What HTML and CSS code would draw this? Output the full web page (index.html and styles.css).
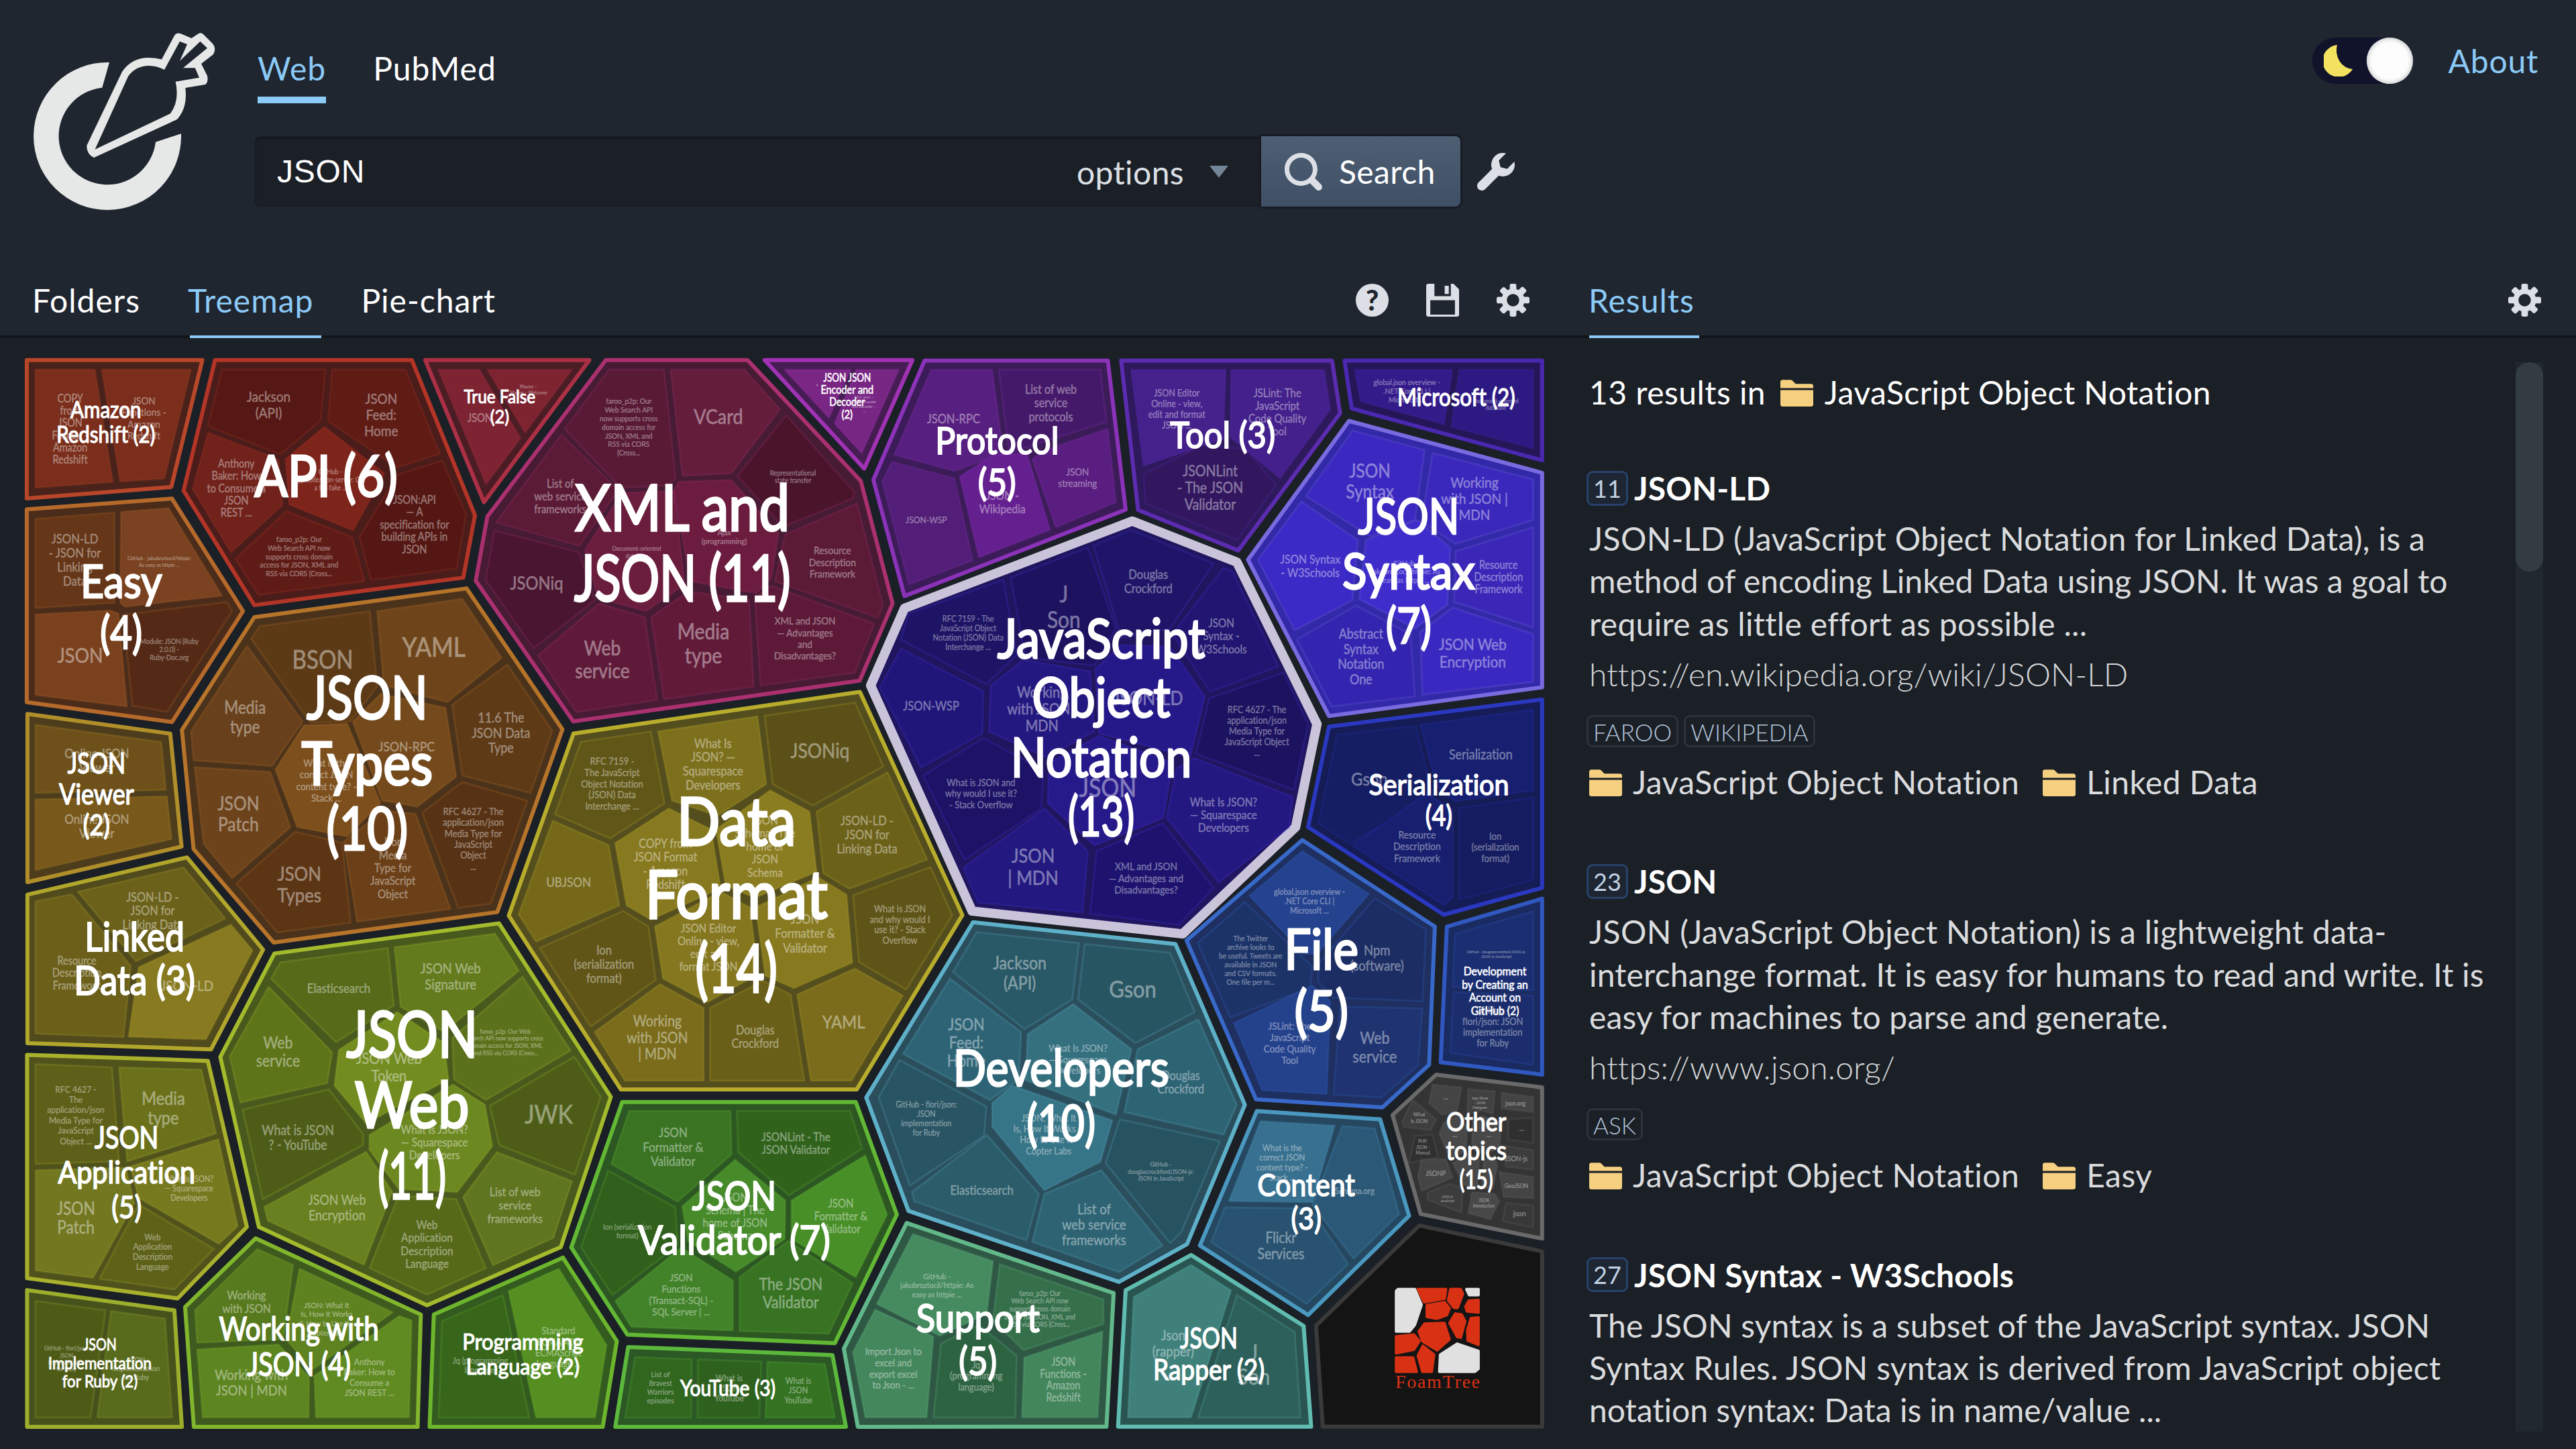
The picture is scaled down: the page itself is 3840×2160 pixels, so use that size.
FILE: index.html
```html
<!DOCTYPE html>
<html lang="en">
<head>
<meta charset="utf-8">
<title>JSON - Carrot2 search results clustering</title>
<link rel="stylesheet" href="styles.css">
</head>
<body>
<svg class="defs" width="0" height="0">
  <symbol id="i-cog" viewBox="0 0 16 16"><path fill-rule="evenodd" d="M15.19 6.39h-1.85c-.11-.37-.27-.71-.45-1.04l1.36-1.36c.31-.31.31-.82 0-1.13l-1.13-1.13a.803.803 0 00-1.13 0l-1.36 1.36c-.33-.17-.67-.33-1.04-.44V.79c0-.44-.36-.8-.8-.8h-1.6c-.44 0-.8.36-.8.8v1.86c-.39.12-.75.28-1.1.47l-1.3-1.3c-.3-.3-.79-.3-1.09 0L1.82 2.91c-.3.3-.3.79 0 1.09l1.3 1.3c-.2.34-.36.7-.48 1.09H.79c-.44 0-.8.36-.8.8v1.6c0 .44.36.8.8.8h1.85c.11.37.27.71.45 1.04l-1.36 1.36c-.31.31-.31.82 0 1.13l1.13 1.13c.31.31.82.31 1.13 0l1.36-1.36c.33.18.67.33 1.04.44v1.86c0 .44.36.8.8.8h1.6c.44 0 .8-.36.8-.8v-1.86c.39-.12.75-.28 1.1-.47l1.3 1.3c.3.3.79.3 1.09 0l1.09-1.09c.3-.3.3-.79 0-1.09l-1.3-1.3c.19-.35.36-.71.48-1.1h1.85c.44 0 .8-.36.8-.8v-1.6a.816.816 0 00-.81-.79zm-7.2 4.6c-1.66 0-3-1.34-3-3s1.34-3 3-3 3 1.34 3 3-1.34 3-3 3z"/></symbol>
  <symbol id="i-folder" viewBox="0 0 16 16"><path d="M0 14c0 .55.45 1 1 1h14c.55 0 1-.45 1-1V7H0v7zM15 4H7.41L5.7 2.3A.965.965 0 005 2H1c-.55 0-1 .45-1 1v3h16V5c0-.55-.45-1-1-1z"/></symbol>
  <symbol id="i-search" viewBox="0 0 16 16"><path fill-rule="evenodd" d="M15.55 13.43l-2.67-2.68a6.94 6.94 0 001.11-3.76c0-3.87-3.13-7-7-7s-7 3.13-7 7 3.13 7 7 7c1.39 0 2.68-.42 3.76-1.11l2.68 2.67a1.498 1.498 0 102.12-2.12zm-8.56-1.44c-2.76 0-5-2.24-5-5s2.24-5 5-5 5 2.24 5 5-2.24 5-5 5z"/></symbol>
  <symbol id="i-wrench" viewBox="0 0 16 16"><path d="M15.83 3.7l-3.06 3.05-2.84-.7-.7-2.83L12.29.17a5.004 5.004 0 00-4.83 1.29 4.967 4.967 0 00-1.12 5.36L.58 12.58c-.36.36-.58.86-.58 1.41 0 1.1.9 2 2 2 .55 0 1.05-.22 1.41-.59l5.77-5.77c1.79.69 3.91.35 5.35-1.12 1.32-1.3 1.74-3.15 1.3-4.81z"/></symbol>
  <symbol id="i-save" viewBox="0 0 16 16"><path fill-rule="evenodd" d="M1 0h3v6h8V0h1.3L16 2.7V15c0 .55-.45 1-1 1H1c-.55 0-1-.45-1-1V1c0-.55.45-1 1-1zM2 8v7h12V8zM9 1h2v4H9z"/></symbol>
</svg>

<header class="header">
  <svg class="logo" viewBox="0 0 380 400" width="380" height="400">
    <path d="M163 93A110 110 0 1 0 270 199.3L232 211.7A72.5 72.5 0 1 1 152.3 130.7Z"/>
    <path fill-rule="evenodd" d="M140 235Q129 230 129.300 217L182 107Q196 86 222 86Q232 86 241 88.500L260 53Q263 48 269 50L285.500 57L296 50Q300 48 303 51L317 65Q323 72 318 81L300 95L309 113Q311 122 306 126L276.300 131Q280 160 264 178ZM141.600 222.700L254 169.300Q268 150 261.700 121.700L297 115.700L290.800 101.300H273L309 71.700L298.500 61.700L268 90.700L279 66L268 61.700L245 104Q234 98 222 98Q203 98 191.300 113.300Z"/>
  </svg>
  <div class="search-area">
    <nav class="sources"><a class="active">Web</a><a>PubMed</a></nav>
    <div class="search-row">
      <div class="query"><span class="term">JSON</span><span class="options">options</span><i class="caret"></i></div>
      <button class="go"><svg class="icon-lg"><use href="#i-search"/></svg>Search</button>
      <svg class="icon-lg wrench"><use href="#i-wrench"/></svg>
    </div>
  </div>
  <div class="top-right">
    <div class="toggle">
      <svg class="moon" viewBox="0 0 43 47"><path d="M20 0A24 24 0 1 0 43 36A24.500 28 0 0 1 20 0Z"/></svg>
      <span class="knob"></span>
    </div>
    <a class="about">About</a>
  </div>
</header>

<main class="panes">
  <section class="clusters">
    <div class="tabs">
      <a>Folders</a><a class="active">Treemap</a><a>Pie-chart</a>
      <div class="tools">
        <span class="icon help">?</span>
        <svg class="icon"><use href="#i-save"/></svg>
        <svg class="icon"><use href="#i-cog"/></svg>
      </div>
    </div>
    <svg id="treemap" class="treemap" viewBox="0 504 2340 1656"></svg>
  </section>

  <section class="results">
    <div class="tabs">
      <a class="active">Results</a>
      <div class="tools"><svg class="icon"><use href="#i-cog"/></svg></div>
    </div>
    <div class="results-body">
      <div class="list">
        <p class="summary">13 results in <svg class="icon folder"><use href="#i-folder"/></svg>JavaScript Object Notation</p>
        <article class="result">
          <h3><span class="rank">11</span>JSON-LD</h3>
          <p class="snippet"><span class="loose">JSON-LD (JavaScript Object Notation for Linked Data), is a</span><br>method of encoding Linked Data using JSON. It was a goal to<br><span class="loose">require as little effort as possible ...</span></p>
          <p class="url">https://en.wikipedia.org/wiki/JSON-LD</p>
          <div class="tags"><span>FAROO</span><span>WIKIPEDIA</span></div>
          <div class="folders"><span><svg class="icon folder"><use href="#i-folder"/></svg>JavaScript Object Notation</span><span><svg class="icon folder"><use href="#i-folder"/></svg>Linked Data</span></div>
        </article>
        <article class="result">
          <h3><span class="rank">23</span>JSON</h3>
          <p class="snippet"><span class="loose">JSON (JavaScript Object Notation) is a lightweight data-</span><br><span class="airy">interchange format. It is easy for humans to read and write. It is</span><br><span class="airy">easy for machines to parse and generate.</span></p>
          <p class="url">https://www.json.org/</p>
          <div class="tags"><span>ASK</span></div>
          <div class="folders"><span><svg class="icon folder"><use href="#i-folder"/></svg>JavaScript Object Notation</span><span><svg class="icon folder"><use href="#i-folder"/></svg>Easy</span></div>
        </article>
        <article class="result">
          <h3><span class="rank">27</span>JSON Syntax - W3Schools</h3>
          <p class="snippet"><span class="airy">The JSON syntax is a subset of the JavaScript syntax. JSON</span><br><span class="loose">Syntax Rules. JSON syntax is derived from JavaScript object</span><br>notation syntax: Data is in name/value ...</p>
        </article>
      </div>
      <div class="scrollbar"><i></i></div>
    </div>
  </section>
</main>
<script src="treemap.js"></script>
</body>
</html>
```
FILE: styles.css
```css
* { box-sizing: border-box; }
body {
  margin: 0;
  width: 3840px;
  height: 2160px;
  overflow: hidden;
  background: #1b1f26;
  color: #fff;
  font: 48px/63.36px Lato, "Noto Sans", sans-serif;
  font-variant-ligatures: none;
}
.defs { display: block; }
p, h3 { margin: 0; }

.icon { width: 49px; height: 49px; fill: #dce0e6; }
.icon-lg { width: 56px; height: 56px; fill: #dce0e6; flex: none; }
.folder { fill: #f5d080; flex: none; }
.help {
  border-radius: 50%;
  background: #dce0e6;
  color: #1f2630;
  font-size: 42px;
  font-weight: 900;
  letter-spacing: 0;
  line-height: 49px;
  text-align: center;
}

.header { display: flex; height: 400px; background: #1f2630; }
.logo { fill: #e6e8e7; flex: none; }
.search-area { padding-top: 69.700px; }
.sources { display: flex; gap: 70px; padding-left: 4px; letter-spacing: 1px; }
.sources a { border-bottom: 10px solid transparent; padding-bottom: 11px; }
.sources .active { color: #8ccaf7; border-color: #8ccaf7; }
.search-row { display: flex; align-items: center; height: 105px; margin-top: 49px; }
.query {
  display: flex;
  align-items: center;
  width: 1500px;
  height: 105px;
  padding: 0 49px 0 33px;
  background: #1b1f26;
  border-radius: 8px 0 0 8px;
  box-shadow: inset 0 0 0 2px #181c21, inset 0 4px 2px #14181d;
}
.term { flex: 1; font-family: "Liberation Sans", Arial, sans-serif; letter-spacing: .8px; }
.options { color: #dce0e6; margin-right: 38px; padding-top: 3px; letter-spacing: .4px; }
.caret { border: 14px solid transparent; border-top: 18px solid #738698; border-bottom: 0; }
.go {
  display: flex;
  align-items: center;
  gap: 25px;
  width: 297px;
  height: 105px;
  padding: 0 0 0 35px;
  border: 0;
  border-radius: 0 8px 8px 0;
  box-shadow: 0 0 0 3px #181c22;
  background: linear-gradient(#4e5f73, #3f4f66);
  color: #fff;
  font: inherit;
  letter-spacing: .4px;
}
.wrench { margin-left: 25px; }
.top-right { display: flex; align-items: center; height: 69px; margin: 56px 56px 0 auto; gap: 53px; }
.toggle {
  display: flex;
  justify-content: space-between;
  align-items: center;
  width: 150px;
  height: 69px;
  padding-left: 17px;
  border-radius: 35px;
  background: #10132a;
}
.moon { width: 43px; height: 47px; fill: #f3e160; }
.knob { width: 69px; height: 69px; border-radius: 50%; background: #fdfdfd; box-shadow: inset 0 0 6px 2px #c9cccc; }
.about { color: #8ccaf7; letter-spacing: .8px; }

.panes { display: flex; height: 1760px; }
.clusters { width: 2340px; }
.results { flex: 1; display: flex; flex-direction: column; }
.tabs {
  display: flex;
  gap: 71px;
  height: 104px;
  padding: 15.700px 60px 0 48px;
  background: #1f2630;
  border-bottom: 4px solid #13171c;
  letter-spacing: 1px;
}
.results .tabs { padding: 15.700px 52px 0 28px; }
.tabs .active { position: relative; color: #8ccaf7; }
.tabs .active::after {
  content: "";
  position: absolute;
  left: 3px;
  right: -12px;
  bottom: -4px;
  height: 4px;
  background: #8ccaf7;
}
.results .tabs .active::after { left: 1px; right: -7px; }
.tools { display: flex; gap: 56px; margin: 7px 0 0 auto; }
.treemap { display: block; width: 2340px; height: 1656px; }

.results-body { display: flex; justify-content: space-between; flex: 1; min-height: 0; padding: 36px 49px 26px 29px; }
.list { padding-top: 12.700px; height: 1630px; overflow: visible; }
.summary { display: flex; white-space: pre; letter-spacing: .45px; }
.summary .folder { margin: 7px 17px 0 9px; }
.result { margin-top: 80px; }
.result + .result { margin-top: 85.400px; }
.result h3 { display: flex; align-items: center; font-size: 48px; font-weight: 700; letter-spacing: .15px; }
.rank {
  width: 62px;
  height: 52px;
  margin: 0 9px 0 -4px;
  border: 3px solid #27426a;
  border-radius: 9px;
  background: #1d2632;
  color: #c3d2e4;
  font: 400 36px/46px Lato, sans-serif;
  text-align: center;
}
.snippet { margin-top: 11.700px; color: #dadcde; white-space: nowrap; }
.loose { letter-spacing: .3px; }
.airy { letter-spacing: .17px; }
.url { margin-top: 12px; color: #d4d7da; font-weight: 300; letter-spacing: .15px; }
.tags { display: flex; gap: 8px; margin: 29px 0 20px -4px; }
.tags span {
  height: 48px;
  padding: 0 7px;
  border: 3px solid #2a323b;
  border-radius: 9px;
  color: #b4c6dc;
  font-size: 35px;
  font-weight: 300;
  line-height: 44px;
}
.folders { display: flex; gap: 35px; color: #dadcde; letter-spacing: .45px; }
.folders span { display: flex; }
.folders .folder { margin: 7px 16px 0 0; }
.scrollbar { width: 41px; height: 1594px; background: #22282f; }
.scrollbar i { display: block; height: 312px; border-radius: 20px; background: #333b43; }

.treemap text { font-family: Lato, "Noto Sans", sans-serif; text-anchor: middle; }
.treemap polygon { stroke-linejoin: round; }
.group { stroke-width: 6px; }
.group.selected { stroke-width: 14px; }
.cell { stroke-width: 3px; stroke-opacity: .22; }
.cell-label { fill: #fff; stroke: #fff; stroke-width: .016em; opacity: .42; }
.title { fill: #fff; stroke: #fff; stroke-width: .036em; }
.brand { stroke-width: 4px; }
.treemap .brand-name { fill: #d93114; font-family: "Liberation Serif", serif; }
```
FILE: treemap.js
```js
// Survey sheets: every sheet has an origin and a unit size on the canvas.
// A letter before a coordinate selects the sheet it is measured on.
const SHEETS = {
  a: [20, 520, .49745, .35714], b: [700, 520, .5102, .35714],
  c: [1280, 520, .66327, .54847], d: [20, 1040, .49745, .35714],
  e: [740, 1020, .48469, .40816], f: [1280, 1300, .66327, .54209],
  g: [20, 1560, .48469, .37628], h: [740, 1600, .44643, .35077]
};

// Group: [sheet, outline, stroke, background, title, "x baseline pitch widths", cells]
// Cell: [fill, outline, label, "x baseline pitch"]
const FAROO = "faroo_p2p: Our~Web Search API now~supports cross domain~access for JSON, XML and~RSS via CORS (Cross...";
const GROUPS = [
["a","40,47 566,47 473,577 40,624","#b8472a","#49221b","Amazon~Redshift (2)","277 288 104 210,293",[
 ["#7a2e1b","66,87 244,87 298,556 66,580","COPY~from~JSON~Format -~Amazon~Redshift","170 224 51"],
 ["#7a2e1b","265,87 532,87 452,542 320,554","JSON~Functions -~Amazon~Redshift","391 233 48"]]],
["a","604,47 1194,47 1383,695 1348,955 722,1070 510,592","#b23527","#4a1c1a","API (6)","937 615 260 425",[
 ["#561814","625,87 935,87 920,300 800,440 583,322","Jackson~(API)","765 220 67"],
 ["#5e1c15","955,87 1175,87 1278,438 1150,495 943,302","JSON~Feed:~Home","1102 230 67"],
 ["#70221b","583,350 765,445 795,465 806,652 652,850 537,585","Anthony~Baker: How~to Consume a~JSON~REST ...","668 496 51"],
 ["#7d251b","932,325 1112,520 1018,758 826,650 815,460","GitHub -~typicode/json-server: Get~a full fake ...","950 524 33"],
 ["#5f1c16","818,677 1015,785 1052,970 735,1028 665,876",FAROO,"856 806 36"],
 ["#541713","1152,525 1285,467 1356,690 1328,917 1072,965 1037,785","JSON:API~— A~specification for~building APIs in~JSON","1202 646 52"]]],
["b","a1234,47 b350,47 42,640","#ac3045","#4a1d24","True False~(2)","88 226 86 207,55",[
 ["#7d2332","a1273,87 1396,87 1520,372 1416,565","JSON","a1398 304 52"],
 ["#7d2430","52,87 299,87 162,350","Maven –~Maven – Welcome","172 166 24"]]],
["b","398,47 812,47 1143,552 1236,1063 1140,1385 303,1555 18,968 52,700","#aa3070","#461b33","XML and~JSON (11)","622 760 292 620,626",[
 ["#581a35","407,87 568,87 602,540 580,572 440,578 278,335","faroo_p2p: Our~Web Search API~now supports cross~domain access for~JSON, XML and~RSS via CORS~(Cross...","465 230 36"],
 ["#641d3b","587,87 803,87 907,252 765,520 622,530","VCard","727 314 95"],
 ["#4a142b","925,278 1125,600 1120,625 915,742 783,530","Representational~state transfer","945 528 33"],
 ["#5b1a36","268,358 435,590 320,822 77,725","List of~web service~frameworks","265 580 53"],
 ["#6a1d3d","445,602 598,592 628,985 515,1095 375,1040 337,840","Document-oriented~database","488 843 30"],
 ["#6b1c3f","610,555 765,547 903,770 882,955 838,1020 645,970 597,595","Ajax~(programming)","744 778 38"],
 ["#5b1a36","1132,645 1208,1070 1192,1122 892,970 922,775","Resource~Description~Framework","1060 858 49"],
 ["#4a1530","73,758 320,850 365,1050 187,1250 47,965","JSONiq","196 1004 84"],
 ["#5f1a39","378,1063 512,1120 548,1465 312,1517 200,1280","Web~service","388 1280 94"],
 ["#611b39","640,1012 817,1048 830,1410 568,1463 530,1120","Media~type","683 1213 100"],
 ["#5d1a38","880,988 1182,1147 1125,1352 850,1405 833,1040","XML and JSON~— Advantages~and~Disadvantages?","980 1152 48"]]],
["b","862,47 1294,47 1153,500","#a032b4","#461d52","JSON JSON~Encoder and~Decoder~(2)","1103 137 51 138,153,103,32",[
 ["#7a2684","920,87 1113,87 1050,288","•","1015 158 20"],
 ["#782684","1130,87 1254,87 1146,435 1066,312","18.2. json —~JSON encoder~and decoder —~...","1153 207 20"]]],
["c","148,32 560,32 600,437 103,672 33,356","#8a32b8","#3c1c58","Protocol~(5)","311 287 112 275,85",[
 ["#571f80","163,57 300,57 325,285 215,332 80,288","JSON-RPC","213 203 38"],
 ["#45196a","315,57 543,57 557,198 440,243 345,280 337,270","List of web~service~protocols","432 122 37"],
 ["#521e78","75,307 215,352 256,575 113,640 53,360","JSON-WSP","152 474 28"],
 ["#652090","378,282 430,492 270,567 227,347 300,290","JSON -~Wikipedia","323 410 36"],
 ["#5a1d80","560,217 578,417 443,485 390,300 420,275","JSON~streaming","492 345 31"]]],
["c","590,32 1064,32 1082,175 853,548 628,438","#5c2cb0","#2e195c","Tool (3)","818 270 108 234",[
 ["#45218c","612,57 825,57 820,245 640,318","JSON Editor~Online - view,~edit and format~JSON ...","715 130 29"],
 ["#43208b","837,57 1046,57 1060,165 947,352 835,240","JSLint: The~JavaScript~Code Quality~Tool","941 132 34.5"],
 ["#32175f","772,262 870,272 938,370 850,520 645,420 640,340","JSONLint~- The JSON~Validator","790 347 45"]]],
["c","1092,32 1536,32 1536,303 1108,162","#4a28b0","#251757","Microsoft (2)","1343 154 75 262",[
 ["#341b8a","1115,57 1334,57 1316,205 1128,143","global.json overview -~.NET Core CLI |~Microsoft ...","1232 98 24"],
 ["#2c1a82","1350,57 1516,57 1516,270 1332,212","Document-oriented~database","1432 147 18"]]],
["c","1102,196 1536,337 1536,920 1057,998 875,573","#7a6ae0","#3129a8","JSON~Syntax~(7)","1236 503 149 225,295,102",[
 ["#3a28c0","1110,222 1272,275 1250,465 1150,510 1005,400","JSON~Syntax","1149 350 56"],
 ["#3a28bd","1290,283 1516,355 1516,465 1342,530 1265,470","Working~with JSON |~MDN","1384 377 44"],
 ["#3c2ac6","995,415 1122,520 1110,683 980,765 897,573","JSON Syntax~- W3Schools","1015 583 36"],
 ["#3f2dcb","1255,465 1330,540 1323,695 1250,760 1125,680 1140,520","GitHub -~jakubroztocil/httpie: As~easy as httpie ...","1230 590 23"],
 ["#3a27b8","1516,485 1516,757 1338,688 1342,550","Resource~Description~Framework","1438 598 33"],
 ["#3325b0","1118,698 1240,775 1250,945 1063,972 985,790","Abstract~Syntax~Notation~One","1129 788 41"],
 ["#3a29c0","1335,703 1516,775 1516,905 1267,940 1262,770","JSON Web~Encryption","1380 818 48"]]],
["c","1057,1027 1536,953 1536,1465 1315,1538 1010,1300","#2a38c0","#161c55","Serialization~(4)","1304 1212 85 312,60",[
 ["#151e62","1075,1048 1252,1025 1290,1215 1105,1345 1033,1290","Gson","1148 1187 55"],
 ["#171f70","1262,1022 1516,980 1516,1200 1340,1230 1300,1190","Serialization","1398 1116 41"],
 ["#171f6e","1275,1210 1335,1250 1335,1490 1315,1512 1110,1350","Resource~Description~Framework","1255 1330 32"],
 ["#151c60","1350,1248 1516,1220 1516,1443 1350,1497","Ion~(serialization~format)","1431 1334 30"]]],
["a","40,670 475,625 688,1095 475,1558 40,1475","#b5692a","#4b2c1a","Easy~(4)","323 1040 211 242,125",[
 ["#653618","66,710 303,683 303,1060 66,1082","JSON-LD~- JSON for~Linking~Data","184 811 59"],
 ["#7a4220","322,680 465,665 625,1030 335,1077 320,1060","GitHub - jakubroztocil/httpie:~As easy as httpie ...","437 883 26"],
 ["#7a411e","66,1108 290,1092 315,1105 340,1493 66,1445","JSON","200 1311 95"],
 ["#542a16","328,1110 640,1057 655,1095 460,1515 357,1490","Module: JSON (Ruby~2.0.0) -~Ruby-Doc.org","467 1232 34"]]],
["d","a722,1120 1358,1000 e203,165 d1450,895 780,1022 540,632 505,135","#b5742a","#4b321b","JSON~Types~(10)","1060 90 273 360,390,242",[
 ["#5c3a16","a738,1158 1068,1095 1090,1410 1010,1555 890,1560 712,1210","BSON","a927 1335 117"],
 ["#6e451a","a1090,1095 1345,1043 1463,1290 1300,1475 1110,1405","YAML","a1260 1285 125"],
 ["#5e3a17","a1480,1318 e172,170 105,397 d1345,325 1315,30","11.6 The~JSON Data~Type","1461 104 63"],
 ["#68401b","a700,1240 d867,100 775,285 540,262 532,140","Media~type","694 68 80"],
 ["#6c431b","543,290 770,310 830,540 655,755 570,610","JSON~Patch","674 470 87"],
 ["#7c4f1d","870,115 1000,108 1100,440 1000,580 850,540 785,300","What is the~correct JSON~content type? -~Stack ...","938 289 48"],
 ["#744a1c","a1100,1440 d1295,42 1327,330 1210,455 1105,430 1017,100","JSON-RPC","1178 223 62"],
 ["#583214","1345,352 1540,430 1430,860 1333,878 1225,480","RFC 4627 - The~application/json~Media Type for~JavaScript~Object~...","1378 489 46"],
 ["#5c3515","845,560 985,605 1010,940 790,980 668,775","JSON~Types","857 763 91"],
 ["#6b4018","1110,470 1205,485 1310,882 1030,935 990,600","Json~Media~Type for~JavaScript~Object","1137 620 54"]]],
["d","42,68 470,150 504,622 42,770","#b08e2a","#4e3d1c","JSON~Viewer~(2)","249 315 129 172,222,80",[
 ["#6e511a","66,113 443,185 457,385 66,398","Online JSON~Viewer","250 252 60"],
 ["#78581b","66,425 460,412 474,590 66,720","Online JSON~Viewer","250 525 60"]]],
["d","42,822 520,667 748,1052 592,1468 42,1442","#b0a62c","#504a1c","Linked~Data (3)","363 1057 183 296,360",[
 ["#6b5f1a","66,850 175,820 352,1120 330,1417 66,1402","Resource~Description~Framework","190 1115 51"],
 ["#6b611a","193,810 510,708 635,922 367,1100","JSON-LD -~JSON for~Linking Data","417 850 58"],
 ["#877a20","375,1125 652,947 717,1055 577,1427 345,1415","JSON-LD","520 1223 67"]]],
["g","42,33 598,57 718,715 505,998 42,918","#a9b02c","#50521c","JSON~Application~(5)","348 405 137 195,418,92",[
 ["#5e5f18","68,70 303,82 325,455 68,465","RFC 4627 -~The~application/json~Media Type for~JavaScript~Object ...","192 182 41"],
 ["#6b711b","325,82 578,92 623,345 350,455","Media~type","461 230 79"],
 ["#77791f","360,475 630,367 690,712 632,782 385,600","What Is JSON?~— Squarespace~Developers","540 537 37"],
 ["#727720","68,490 345,480 372,620 245,917 68,888","JSON~Patch","192 666 76"],
 ["#5e6118","385,625 617,802 495,962 265,920","Web~Application~Description~Language","428 767 39"]]],
["g","42,965 495,1045 518,1507 42,1507","#9cae2c","#46521c","JSON~Implementation~for Ruby (2)","266 1205 73 102,315,230",[
 ["#4e5b17","68,1008 283,1045 237,1470 68,1470","GitHub - flori/json:~JSON~implementation~for Ruby","163 1205 27"],
 ["#586a1b","300,1048 466,1078 488,1470 258,1470","JSON~Implementation~for Ruby","378 1252 34"]]],
["g","745,760 1253,1062 1243,1507 555,1507 528,1032","#80b52c","#3f5a1e","Working with~JSON (4)","878 1165 140 487,315",[
 ["#587a1e","750,802 860,865 830,1160 565,1173 558,1045","Working~with JSON","717 1003 52"],
 ["#5f8220","880,880 1167,1053 920,1280 838,1160","JSON: What It~Is, How It Works~& How to Use It -~Copter Labs","963 1036 36"],
 ["#5d8520","565,1200 815,1180 910,1310 908,1470 582,1470","Working with~JSON | MDN","732 1321 62"],
 ["#608a22","1187,1067 1225,1085 1217,1470 930,1470 925,1305","Anthony~Baker: How to~Consume a~JSON REST ...","1095 1262 41"]]],
["g","d782,1068 1455,942 h382,100 215,738 g1272,1025 755,715 d620,1500","#a2ba2c","#48591d","JSON~Web~(11)","1226 42 280 400,348,208",[
 ["#566a19","d800,1105 1122,1045 1140,1285 967,1438 772,1173","Elasticsearch","d975 1233 59"],
 ["#637b1d","d1142,1042 1443,985 1515,1140 1290,1395 1160,1290","JSON Web~Signature","d1310 1152 66"],
 ["#5c711b","e80,1068 228,1338 g1453,212 1355,130 d1315,1420","faroo_p2p: Our Web~Search API now supports cross~domain access for JSON, XML~and RSS via CORS (Cross...","d1474 1402 30"],
 ["#5e7419","d765,1207 955,1480 g965,145 698,222 665,40","Web~service","d793 1465 75"],
 ["#728c20","d1150,1312 1290,1440 g1338,130 1085,305 987,155 d975,1470","JSON Web~Token","1155 70 68"],
 ["#4d5d17","705,250 970,170 1075,345 1075,390 767,605","What is JSON~? - YouTube","875 350 59"],
 ["#6c8820","1352,150 1450,230 1473,395 1365,577 1185,565 1095,410 1095,350","What Is JSON?~— Squarespace~Developers","1295 345 51"],
 ["#68801f","1085,417 1165,575 1078,865 782,690 772,635","JSON Web~Encryption","995 628 60"],
 ["#566919","1185,590 1362,605 1453,878 1272,983 1095,878","Web~Application~Description~Language","1272 722 52"],
 ["#4d5d17","e240,1360 h348,100 262,430 10,305 g1465,235","JWK","h175 215 122"],
 ["#607520","1487,418 h253,458 190,700 g1475,867 1383,597","List of web~service~frameworks","h62 522 57"]]],
["e","237,180 1118,28 1433,843 1108,1480 383,1480 38,845","#b8ac2c","#544d1d","Data~Format~(14)","738 588 268 362,555,250",[
 ["#605617","260,210 475,173 517,435 350,563 180,475","RFC 7159 -~The JavaScript~Object Notation~(JSON) Data~Interchange ...","356 295 40.5"],
 ["#7d701d","497,172 803,117 830,365 680,480 540,425","What Is~JSON? —~Squarespace~Developers","666 232 50.5"],
 ["#5b5017","825,115 1103,67 1190,300 973,443 850,365","JSONiq","995 270 82"],
 ["#756819","173,498 345,587 378,808 122,940 68,840","UBJSON","222 741 53"],
 ["#87791f","530,453 660,530 690,745 475,860 400,808 365,580","COPY from~JSON Format~- Amazon~Redshift","520 598 49.5"],
 ["#8a7c20","842,387 963,465 985,685 795,780 705,735 675,530","JSON~Schema | The~home of~JSON~Schema","826 511 48"],
 ["#6c6119","1203,322 1325,640 1085,747 1005,690 985,465","JSON-LD -~JSON for~Linking Data","1140 515 51"],
 ["#5f5417","1335,668 1402,843 1260,1115 1115,1015 1097,770","What is JSON~and why would I~use it? - Stack~Overflow","1241 832 39"],
 ["#605417","390,828 468,885 490,1080 290,1250 133,963","Ion~(serialization~format)","331 987 51"],
 ["#85771f","690,757 780,815 805,1060 648,1162 512,1075 487,885","JSON Editor~Online - view,~edit and~format JSON","652 906 47"],
 ["#87791f","990,705 1077,768 1095,1017 915,1110 827,1065 797,815","JSON~Formatter &~Validator","949 875 52"],
 ["#7a6c1b","503,1095 637,1182 638,1448 395,1448 302,1270","Working~with JSON~| MDN","495 1250 60"],
 ["#6a5f18","820,1083 905,1133 947,1448 657,1448 657,1182","Douglas~Crockford","796 1278 50"],
 ["#7b6c1c","1103,1038 1250,1137 1092,1448 967,1448 925,1133","YAML","1068 1257 74"]]],
["h","g1293,1062 h222,783 402,1138 355,1502 g1280,1507","#6cb52c","#335a1f","Programming~Language (2)","88 1175 105 400,375",[
 ["#37661a","g1318,1088 1505,985 h110,1463 g1308,1470","Jq (programming~language)","g1436 1256 38"],
 ["#558f22","40,925 208,830 368,1155 330,1463 132,1463","Standard~ECMA-404~ECMAScript~Language ...","207 1110 46"]]],
["h","420,122 1200,122 1337,600 1130,1147 437,1110 250,740","#62b835","#2d5722","JSON~Validator (7)","794 582 188 278,635",[
 ["#3a7423","443,160 782,160 785,345 605,545 383,385","JSON~Formatter &~Validator","590 272 61"],
 ["#30621c","803,160 1180,160 1222,320 977,518 807,335","JSONLint - The~JSON Validator","1000 288 55"],
 ["#478a2a","797,367 965,540 963,705 800,843 640,715 620,565","JSON~Schema | The~home of JSON~Schema","797 543 54.5"],
 ["#488f28","1232,348 1305,600 1200,867 985,705 985,540","JSON~Formatter &~Validator","1150 569 54"],
 ["#30601c","373,413 597,570 605,730 387,942 283,740","Ion (serialization~format)","437 664 37"],
 ["#42832a","617,740 790,880 790,1093 450,1078 397,968","JSON~Functions~(Transact-SQL) -~SQL Server | ...","617 883 49"],
 ["#387323","975,712 1190,892 1110,1107 812,1095 812,865","The JSON~Validator","983 920 77"]]],
["h","440,1163 1122,1197 1167,1502 397,1502","#5cb83c","#2b5824","YouTube (3)","773 1370 100 315",[
 ["#31661f","463,1206 652,1215 650,1463 430,1463","List of~Bravest~Warriors~episodes","548 1291 37.5"],
 ["#2f611e","673,1215 885,1225 878,1463 672,1463","What is~JSON~YouTube","777 1307 43"],
 ["#357322","905,1225 1097,1235 1130,1463 898,1463","What is~JSON~YouTube","1008 1320 41"]]],
["f","108,965 573,1158 557,1525 h1207,1502 1160,1170","#62b88a","#2f5844","Support~(5)","268 1265 118 275,85",[
 ["#468a5f","122,995 302,1070 288,1215 182,1275 h1270,980","GitHub -~jakubroztocil/httpie: As~easy as httpie ...","176 1119 25"],
 ["#36704a","317,1078 550,1175 550,1243 370,1315 302,1232",FAROO,"407 1165 21.5"],
 ["#45875d","37,1203 168,1277 153,1500 15,1500 h1190,1185","Import Json to~excel and~export excel~to Json - ...","78 1328 31"],
 ["#2d6340","185,1297 270,1245 355,1330 352,1500 168,1500","Jq~(programming~language)","264 1365 30"],
 ["#43865c","548,1263 537,1500 367,1500 372,1335","JSON~Functions -~Amazon~Redshift","460 1357 33"]]],
["f","747,1053 1000,1248 1017,1525 583,1525 600,1150","#60bcb0","#2a5450","JSON~Rapper (2)","787 1310 86 128,248",[
 ["#3f807a","747,1080 837,1150 747,1500 605,1500 618,1168","Json~(rapper)","707 1288 43"],
 ["#2d5f5b","850,1163 980,1265 993,1500 763,1500","J~Son","888 1342 68"]]],
["f","257,138 712,198 868,640 738,1023 585,1127 112,932 17,620","#5eb0c8","#2a4e5c","Developers~(10)","455 588 152 480,153",[
 ["#295866","265,165 495,195 480,350 373,432 212,275","Jackson~(API)","362 268 54"],
 ["#285562","508,198 700,222 755,385 622,470 493,350","Gson","616 344 72"],
 ["#2d6375","205,293 365,440 360,570 295,627 100,500","JSON~Feed:~Home","242 435 50"],
 ["#35707f","482,363 613,487 578,667 375,572 380,445","What Is JSON?~— Squarespace~Developers","493 494 31"],
 ["#2d6474","763,405 850,640 820,722 597,660 627,487","Douglas~Crockford","724 572 37"],
 ["#285463","92,517 287,645 282,725 115,862 45,620","GitHub - flori/json:~JSON~implementation~for Ruby","152 648 25.5"],
 ["#367487","345,587 570,683 543,797 417,875 300,700 300,635","JSON: What It~Is, How It Works &~How to Use It -~Copter Labs","427 686 30"],
 ["#275260","587,680 812,740 725,990 700,1020 555,800","GitHub -~douglascrockford/JSON-js:~JSON in JavaScript","679 810 19.5"],
 ["#2b5c6a","288,723 405,885 377,1013 125,905 120,880","Elasticsearch","277 888 39"],
 ["#2d6373","545,820 683,1027 585,1100 390,1017 417,885","List of~web service~frameworks","529 940 43"]]],
["f","997,-88 1295,150 1282,530 1177,647 893,625 737,188","#3868c8","#1e2f60","File~(5)","1040 267 170 165,120",[
 ["#25428f","997,-58 1147,60 1030,225 1000,225 878,65","global.json overview -~.NET Core CLI |~Microsoft ...","1013 63 26"],
 ["#1c3368","868,82 1020,260 1015,318 835,400 762,195","The Twitter~archive looks to~be useful. Tweets are~available in JSON~and CSV formats.~One file per m...","881 190 24"],
 ["#1b2d63","1160,72 1275,158 1267,355 1065,345 1032,300 1035,250","Npm~(software)","1165 228 43"],
 ["#24418c","843,415 1020,312 1060,355 1052,610 907,600","JSLint: The~JavaScript~Code Quality~Tool","969 433 31.5"],
 ["#1e3370","1082,370 1267,375 1257,532 1175,620 1067,612","Web~service","1160 473 50"]]],
["f","1322,150 1536,73 1536,557 1308,523","#3058c0","#1a2b62","Development~by Creating an~Account on~GitHub (2)","1430 284 36 140,147,115,107",[
 ["#1b2e72","1340,170 1516,108 1516,325 1335,315","GitHub - douglascrockford/JSON-js:~JSON in JavaScript","1433 223 13"],
 ["#1b2d6c","1337,330 1516,340 1516,530 1330,497","GitHub -~flori/json: JSON~implementation~for Ruby","1425 390 30"]]],
["f","895,657 1172,680 1237,945 1010,1218 767,1027","#4a98c0","#264760","Content~(3)","1006 890 93 217,68",[
 ["#38708f","903,685 1070,697 1020,908 832,905","What is the~correct JSON~content type? -~Stack ...","952 767 27"],
 ["#2c5878","1087,698 1160,705 1215,940 1112,1063 1020,915","Schema.org","1115 885 27"],
 ["#285270","823,922 1015,925 1100,1078 1007,1187 792,1018","Flickr~Services","949 1020 45"]]],
["f","1298,557 1536,592 1536,1008 1263,940 1200,668","#6a6a6a","#343434","Other~topics~(15)","1388 712 79 133,135,75",[
 ["#444","1290,585 1355,592 1345,655 1312,668 1282,635","...","1320 625 24"],
 ["#414141","1370,597 1430,603 1425,665 1400,655 1368,668","App Store~- JSON~Designer","1396 626 13"],
 ["#444","1445,607 1516,618 1516,660 1445,650","json.org","1476 641 20"],
 ["#3e3e3e","1245,627 1298,680 1285,710 1225,700 1222,685","What~Is JSON","1260 672 17"],
 ["#2f2f2f","1460,680 1516,675 1516,745 1460,735","...","1490 712 24"],
 ["#303030","1250,725 1290,722 1302,785 1237,800","PHP:~JSON -~Manual","1268 746 15"],
 ["#484848","1315,690 1345,670 1368,700 1365,765 1330,790 1305,720","...","1340 728 24"],
 ["#484848","1380,685 1400,670 1445,690 1440,760 1405,775 1378,760","...","1416 728 24"],
 ["#3c3c3c","1450,752 1516,765 1516,818 1455,810","JSON-js","1478 795 22"],
 ["#454545","1265,790 1320,790 1335,840 1265,877 1257,835","JSONP","1297 835 22"],
 ["#484848","1335,800 1370,775 1395,790 1390,870 1360,860","",""],
 ["#484848","1405,790 1430,780 1435,810 1425,870 1400,870","",""],
 ["#444","1440,825 1516,838 1516,897 1450,893","GeoJSON","1478 868 19"],
 ["#3c3c3c","1330,857 1357,870 1355,937 1278,900 1280,880","JSON in~JavaScript","1323 896 11"],
 ["#484848","1378,880 1430,885 1440,905 1420,955 1370,938","JSON~Introduction","1405 908 14"],
 ["#383838","1455,910 1516,917 1516,977 1447,960","json","1485 947 25"]]],
["c","615,468 850,580 1030,1020 982,1300 728,1590 255,1528 27,915 103,705","#c9c4da","#20155f","JavaScript~Object~Notation~(13)","545 840 161.5 462,308,402,148",[
 ["#1d1465","95,790 112,720 325,628 355,832 287,912","RFC 7159 - The~JavaScript Object~Notation (JSON) Data~Interchange ...","246 742 25.5"],
 ["#1c1260","342,622 515,540 578,760 530,860 375,840","J~Son","461 690 69"],
 ["#1f1568","612,492 798,583 700,760 590,785 528,535","Douglas~Crockford","651 625 38"],
 ["#201570","820,595 840,605 943,863 790,932 705,775","JSON~Syntax -~W3Schools","815 757 35"],
 ["#20167a","95,815 280,930 278,1045 140,1138 48,920","JSON-WSP","163 982 38"],
 ["#231880","370,845 520,877 530,1040 420,1110 293,1040 297,915","Working~with JSON |~MDN","412 948 46"],
 ["#251888","590,805 700,810 778,945 745,1110 540,1045 532,870","JSON-LD","650 968 58"],
 ["#1b1260","955,880 1010,1020 978,1198 758,1100 788,950","RFC 4627 - The~application/json~Media Type for~JavaScript Object~...","895 990 29"],
 ["#1c1266","280,1058 415,1145 410,1250 238,1388 145,1160","What is JSON and~why would I use it?~- Stack Overflow","275 1189 29.5"],
 ["#261a8a","540,1052 705,1125 685,1275 530,1350 425,1235 428,1125","JSON","560 1218 78"],
 ["#231880","755,1112 975,1218 968,1300 810,1450 692,1275 715,1140","What Is JSON?~— Squarespace~Developers","820 1243 35"],
 ["#22187f","418,1250 515,1365 503,1532 268,1505 235,1410","JSON~| MDN","392 1397 59"],
 ["#1d136e","683,1290 798,1465 720,1565 520,1535 535,1365","XML and JSON~— Advantages and~Disadvantages?","646 1417 32"]],"selected"]
];

const RED = "#d93114", PALE = "#e0e0e0";
const BRAND = [
 [PALE,"1212,1147 1250,1147 1265,1190 1250,1245 1238,1263 1208,1263 1208,1152"],
 [RED,"1257,1147 1320,1147 1317,1173 1271,1183"], [RED,"1330,1147 1353,1147 1358,1160 1346,1198 1338,1198 1325,1178"],
 [PALE,"1366,1147 1393,1147 1393,1163 1372,1163"], [RED,"1371,1179 1393,1177 1393,1211 1367,1208 1364,1195"],
 [RED,"1277,1191 1317,1183 1328,1200 1322,1218 1300,1228 1277,1223"], [RED,"1341,1214 1355,1217 1363,1235 1353,1280 1345,1278 1328,1240"],
 [RED,"1376,1227 1393,1225 1393,1300 1369,1288 1368,1260"], [RED,"1272,1242 1316,1240 1328,1285 1300,1315 1267,1290 1259,1263"],
 [RED,"1208,1277 1248,1272 1260,1290 1248,1313 1208,1323"], [RED,"1208,1335 1246,1335 1254,1374 1208,1374"],
 [RED,"1268,1303 1293,1327 1288,1374 1267,1374 1257,1330"], [PALE,"1345,1297 1393,1317 1393,1366 1385,1374 1305,1374 1307,1327"]
];

const NS = "http://www.w3.org/2000/svg";
const svg = document.getElementById("treemap");
const SQUEEZE = .87;

function add(name, attrs, text) {
  const node = document.createElementNS(NS, name);
  for (const key in attrs) node.setAttribute(key, attrs[key]);
  if (text) node.textContent = text;
  svg.appendChild(node);
  return node;
}

function points(sheet, list) {
  return list.split(" ").map(pair => {
    if (/[a-h]/.test(pair[0])) { sheet = pair[0]; pair = pair.slice(1); }
    const [x, y] = pair.split(",").map(Number), [ox, oy, sx, sy] = SHEETS[sheet];
    return (ox + x * sx).toFixed(1) + "," + (oy + y * sy).toFixed(1);
  }).join(" ");
}

function label(sheet, text, place, cls) {
  if (!text) return;
  if (/[a-h]/.test(place[0])) { sheet = place[0]; place = place.slice(1); }
  const parts = place.split(" ");
  const widths = (parts[3] || "").split(",");
  const [x, y, pitch] = parts.map(Number), [ox, oy, sx, sy] = SHEETS[sheet];
  text.split("~").forEach((line, i) => {
    const node = add("text", { class: cls, "font-size": (pitch * sy * .91).toFixed(1) }, line);
    // Titles have a measured width; other labels share one condensed ratio.
    const ratio = widths[i] ? widths[i] * sx * 1.01 / node.getComputedTextLength() : SQUEEZE;
    node.setAttribute("transform", `translate(${(ox + x * sx).toFixed(1)} ${(oy + (y + i * pitch) * sy).toFixed(1)}) scale(${ratio.toFixed(3)} 1)`);
  });
}

for (const [sheet, outline, stroke, back, title, place, cells, state] of GROUPS) {
  add("polygon", { class: "group " + (state || ""), points: points(sheet, outline), fill: back, stroke });
  for (const [fill, shape, text, at] of cells) {
    const edge = state ? "#4a38e0" : stroke;
    add("polygon", { class: "cell", points: points(sheet, shape), fill, stroke: edge });
    label(sheet, text, at, "cell-label");
  }
  label(sheet, title, place, "title");
}

add("polygon", { class: "group", points: points("f", "1260,972 1536,1043 1536,1525 1043,1525 1028,1247"), fill: "#141414", stroke: "#3a3a3a" });
for (const [color, shape] of BRAND) add("polygon", { class: "brand", points: points("f", shape), fill: color, stroke: color });
add("text", { class: "brand-name", x: 2143, y: 2069, "font-size": 28, textLength: 126, lengthAdjust: "spacing" }, "FoamTree");
```
